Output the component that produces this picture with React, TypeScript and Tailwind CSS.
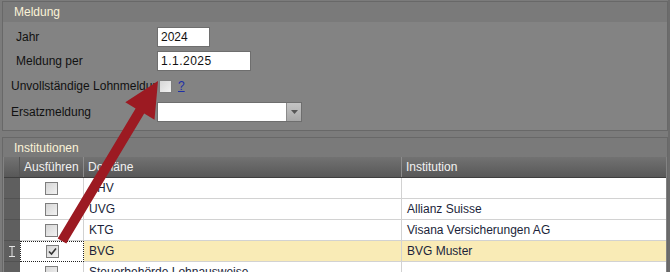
import React from "react";

const font = { fontFamily: '"Liberation Sans", Arial, sans-serif' };

type Row = { domain: string; inst: string; checked?: boolean; active?: boolean };

const rows: Row[] = [
  { domain: "AHV", inst: "" },
  { domain: "UVG", inst: "Allianz Suisse" },
  { domain: "KTG", inst: "Visana Versicherungen AG" },
  { domain: "BVG", inst: "BVG Muster", checked: true, active: true },
  { domain: "Steuerbehörde Lohnausweise", inst: "" },
];

function Check({ checked }: { checked?: boolean }) {
  return (
    <span className="flex h-[13px] w-[13px] items-center justify-center border border-[#7e7e7e] bg-gradient-to-br from-[#d6d6d6] to-[#f2f2f2]">
      {checked && (
        <svg width="9" height="9" viewBox="0 0 9 9">
          <path d="M1 4.5 L3.5 7 L8 1.5" fill="none" stroke="#333" strokeWidth="1.6" />
        </svg>
      )}
    </span>
  );
}

function Field({ label, indent, children }: { label: string; indent?: boolean; children: React.ReactNode }) {
  return (
    <div className="flex h-[20px] items-center">
      <div className={`w-[154px] shrink-0 overflow-hidden whitespace-nowrap text-[12px] text-[#111] ${indent ? "pl-[13px]" : "pl-[8px]"}`}>
        {label}
      </div>
      {children}
    </div>
  );
}

export default function App() {
  return (
    <div className="relative h-[272px] w-[670px] overflow-hidden bg-[#7b7b7b] pt-[1px]" style={font}>
      {/* ── Meldung ───────────────────────── */}
      <div className="ml-[2px] mr-[2px] h-[130px] border border-[#686868] bg-[#838383]">
        <div className="flex h-[20px] items-center bg-[#7a7a7a] pl-[11px] text-[12px] text-[#fbf3d8]">Meldung</div>
        <div className="flex flex-col pt-[5px]">
          <Field label="Jahr" indent>
            <div className="flex h-[20px] w-[53px] items-center border border-[#6e6e6e] bg-white pl-[3px] text-[12px] text-[#111]">2024</div>
          </Field>
          <div className="h-[4px]" />
          <Field label="Meldung per" indent>
            <div className="flex h-[20px] w-[94px] items-center border border-[#6e6e6e] bg-white pl-[3px] text-[12px] tracking-[0.5px] text-[#111]">1.1.2025</div>
          </Field>
          <div className="h-[5px]" />
          <Field label="Unvollständige Lohnmeldung">
            <div className="flex items-center gap-[6px] pl-[2px]">
              <Check />
              <span className="text-[12px] text-[#1d2fa8] underline">?</span>
            </div>
          </Field>
          <div className="h-[6px]" />
          <Field label="Ersatzmeldung">
            <div className="flex h-[20px] w-[145px] border border-[#6e6e6e] bg-white">
              <div className="flex-1" />
              <div className="flex w-[15px] items-center justify-center border-l border-[#8a8a8a] bg-gradient-to-b from-[#c4c4c4] to-[#a8a8a8]">
                <svg width="7" height="4" viewBox="0 0 7 4">
                  <path d="M0 0 H7 L3.5 4 Z" fill="#555" />
                </svg>
              </div>
            </div>
          </Field>
        </div>
      </div>

      {/* ── Institutionen ─────────────────── */}
      <div className="ml-[2px] mr-[2px] mt-[6px] h-[140px] border border-[#686868] bg-[#838383]">
        <div className="flex h-[19px] items-center bg-[#7a7a7a] pl-[11px] text-[12px] text-[#fbf3d8]">Institutionen</div>
        <div className="ml-[1px] mr-[1px] flex flex-col text-[12px]">
          <div className="flex h-[21px] border-b border-[#3e3e3e] bg-gradient-to-b from-[#727272] to-[#585858] text-[#f2f2f2]">
            <div className="w-[16px] border-r border-[#555]" />
            <div className="flex w-[64px] items-center border-r border-[#8c8c8c] pl-[4px]">Ausführen</div>
            <div className="flex w-[318px] items-center border-r border-[#8c8c8c] pl-[4px]">Domäne</div>
            <div className="flex flex-1 items-center pl-[4px]">Institution</div>
          </div>
          {rows.map((r) => (
            <div key={r.domain} className="flex h-[21px] text-[#1b1f3a]">
              <div className="flex w-[16px] items-center justify-center border-b border-[#525252] bg-[#5f5f5f]">
                {r.active && (
                  <svg width="6" height="11" viewBox="0 0 6 11">
                    <path d="M0 0.5 H6 M3 0.5 V10.5 M0 10.5 H6" stroke="#e6e6e6" strokeWidth="1" fill="none" />
                  </svg>
                )}
              </div>
              <div
                className={`flex w-[64px] items-center justify-center bg-white ${
                  r.active ? "border border-dotted border-[#222]" : "border-b border-r border-[#d2d2d2]"
                }`}
              >
                <Check checked={r.checked} />
              </div>
              <div className={`flex w-[318px] items-center border-b border-r border-[#d2d2d2] pl-[5px] ${r.active ? "bg-[#f9ebb6]" : "bg-white"}`}>
                {r.domain}
              </div>
              <div className={`flex flex-1 items-center border-b border-[#d2d2d2] pl-[5px] ${r.active ? "bg-[#f9ebb6]" : "bg-white"}`}>
                {r.inst}
              </div>
            </div>
          ))}
        </div>
      </div>
      <div className="absolute right-0 top-0 h-full w-[2px] bg-[#6c6c6c]" />

      {/* red annotation arrow */}
      <svg className="pointer-events-none absolute left-0 top-0" width="670" height="272">
        <polygon
          points="57.7,238.4 135.6,108.4 125.3,102.2 158,81 154.5,119.8 144.2,113.6 66.3,243.6"
          fill="#9c1a22"
        />
      </svg>
    </div>
  );
}
